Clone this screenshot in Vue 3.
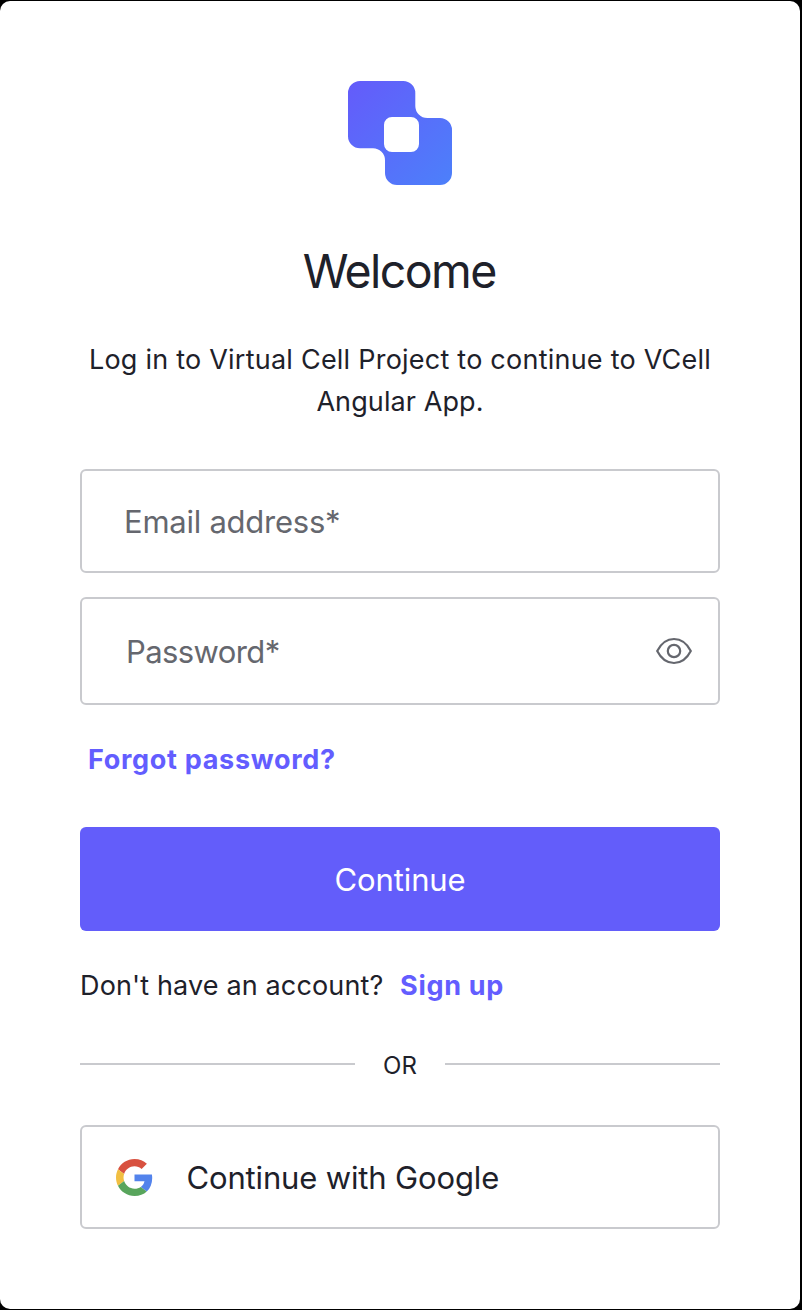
<script setup>
import { ref } from 'vue'

const email = ref('')
const password = ref('')
const visible = ref(false)
</script>

<template>
  <div class="page">
    <main class="card">
      <svg class="logo" viewBox="0 0 104 104" aria-hidden="true">
        <defs>
          <linearGradient id="brand" x1="0" y1="0" x2="1" y2="1">
            <stop offset="0.05" stop-color="#635dfa" />
            <stop offset="1" stop-color="#4c80fa" />
          </linearGradient>
        </defs>
        <path
          fill="url(#brand)"
          fill-rule="evenodd"
          d="M12 0H55.3A12 12 0 0 1 67.3 12V25A12 12 0 0 0 79.300 37H92A12 12 0 0 1 104 49V92A12 12 0 0 1 92 104H49A12 12 0 0 1 37 92V79.300A12 12 0 0 0 25 67.300H12A12 12 0 0 1 0 55.300V12A12 12 0 0 1 12 0ZM44 36A8 8 0 0 0 36 44V63A8 8 0 0 0 44 71H63A8 8 0 0 0 71 63V44A8 8 0 0 0 63 36Z"
        />
      </svg>
      <h1 class="title">Welcome</h1>
      <p class="intro">Log in to Virtual Cell Project to continue to VCell<br /><span class="second">Angular App.</span></p>

      <form class="form" @submit.prevent>
        <label class="field email">
          <input v-model="email" class="input" type="text" placeholder="Email address*" />
        </label>
        <div class="field password">
          <input v-model="password" class="input" :type="visible ? 'text' : 'password'" placeholder="Password*" />
          <button class="eye" type="button" aria-label="Show password" @click="visible = !visible">
            <svg viewBox="0 0 36 28" fill="none" stroke="#65676e" stroke-width="2.2">
              <path d="M1.200 14C5 6.600 11 2 18 2S31 6.600 34.800 14C31 21.400 25 26 18 26S5 21.400 1.200 14Z" stroke-linejoin="round" />
              <circle cx="18" cy="14" r="6.200" />
            </svg>
          </button>
        </div>
        <a class="link forgot">Forgot password?</a>
        <button class="submit" type="submit"><span>Continue</span></button>
      </form>

      <p class="signup"><span class="question">Don't have an account?</span><a class="link">Sign up</a></p>

      <div class="divider"><span class="or">OR</span></div>

      <button class="social" type="button">
        <svg class="google" viewBox="0 0 48 48" aria-hidden="true">
          <path fill="#d85140" d="M24 9.500c3.540 0 6.710 1.220 9.210 3.600l6.850-6.850C35.900 2.380 30.470 0 24 0 14.620 0 6.510 5.380 2.560 13.220l7.980 6.190C12.430 13.720 17.740 9.500 24 9.500z" />
          <path fill="#5383ec" d="M46.980 24.550c0-1.570-.15-3.090-.38-4.550H24v9.020h12.940c-.58 2.960-2.260 5.480-4.780 7.180l7.730 6c4.510-4.180 7.090-10.360 7.090-17.650z" />
          <path fill="#f1bf42" d="M10.530 28.590c-.48-1.450-.76-2.990-.76-4.590s.27-3.140.76-4.590l-7.980-6.190C.92 16.460 0 20.120 0 24c0 3.880.92 7.540 2.560 10.780l7.970-6.190z" />
          <path fill="#58a55c" d="M24 48c6.480 0 11.930-2.130 15.890-5.810l-7.730-6c-2.150 1.450-4.920 2.300-8.160 2.300-6.260 0-11.570-4.220-13.470-9.910l-7.980 6.190C6.510 42.620 14.620 48 24 48z" />
        </svg>
        <span class="social-label">Continue with Google</span>
      </button>
    </main>
  </div>
</template>

<style>
body {
  background: #000;
}
</style>

<style scoped>
.page {
  height: 1310px;
  padding: 1px 2px 1px 0;
  box-sizing: border-box;
  background: #000;
  font-family: Inter, 'Liberation Sans', sans-serif;
  color: #1e212a;
}
.card {
  display: flex;
  flex-direction: column;
  height: 1308px;
  padding: 80px 80px 0;
  box-sizing: border-box;
  border-radius: 10px;
  background: #fff;
}
.logo {
  width: 104px;
  height: 104px;
  align-self: center;
}
.title {
  margin: 57px 0 0;
  font-size: 46.5px;
  line-height: 58px;
  font-weight: 400;
  letter-spacing: -1.6px;
  text-indent: -1.6px;
  text-align: center;
}
.intro {
  margin: 39px -10px 0;
  font-size: 27px;
  line-height: 42px;
  letter-spacing: 0.23px;
  text-align: center;
  white-space: nowrap;
}
.second {
  letter-spacing: 0.1px;
}
.form {
  display: flex;
  flex-direction: column;
  margin-top: 46px;
}
.field {
  display: flex;
  align-items: center;
  box-sizing: border-box;
  border: 2px solid #c9cace;
  border-radius: 6px;
}
.email {
  height: 104px;
  padding-left: 42px;
}
.password {
  height: 108px;
  margin-top: 24px;
  padding: 0 26px 0 44px;
}
.input {
  flex: 1;
  min-width: 0;
  height: 40px;
  margin: 2px 0 0;
  padding: 0;
  box-sizing: border-box;
  border: 0;
  outline: 0;
  background: none;
  font: inherit;
  font-size: 31px;
  letter-spacing: -0.25px;
  line-height: 40px;
  color: #1e212a;
}
.password .input {
  letter-spacing: -0.6px;
}
.input::placeholder {
  color: #65676e;
  opacity: 1;
}
.eye {
  width: 36px;
  height: 28px;
  padding: 0;
  border: 0;
  background: none;
}
.eye svg {
  display: block;
  width: 36px;
  height: 28px;
}
.link {
  color: #635dff;
  font-size: 27px;
  font-weight: 700;
  letter-spacing: 0.7px;
}
.forgot {
  align-self: flex-start;
  margin: 34px 0 0 8px;
  line-height: 42px;
}
.submit {
  height: 104px;
  margin-top: 46px;
  padding: 0;
  border: 0;
  border-radius: 6px;
  background: #635dfa;
  color: #fff;
  font: inherit;
  font-size: 31px;
  letter-spacing: -0.1px;
}
.signup {
  display: flex;
  margin: 34px 0 0;
  font-size: 27px;
  line-height: 42px;
  letter-spacing: 0.14px;
  white-space: nowrap;
}
.question {
  width: 320px;
}
.divider {
  display: flex;
  align-items: center;
  height: 40px;
  margin-top: 37px;
}
.divider::before,
.divider::after {
  content: '';
  width: 275px;
  height: 2px;
  background: #c9cace;
}
.or {
  flex: 1;
  padding-top: 3px;
  font-size: 24px;
  font-weight: 400;
  text-align: center;
}
.social {
  display: flex;
  align-items: center;
  height: 104px;
  margin-top: 41px;
  padding: 0 0 0 33.5px;
  box-sizing: border-box;
  border: 2px solid #c9cace;
  border-radius: 6px;
  background: #fff;
  color: #1e212a;
  font: inherit;
  font-size: 31px;
  letter-spacing: -0.15px;
}
.google {
  width: 37px;
  height: 37px;
}
.social-label {
  margin-left: 34px;
}
</style>
